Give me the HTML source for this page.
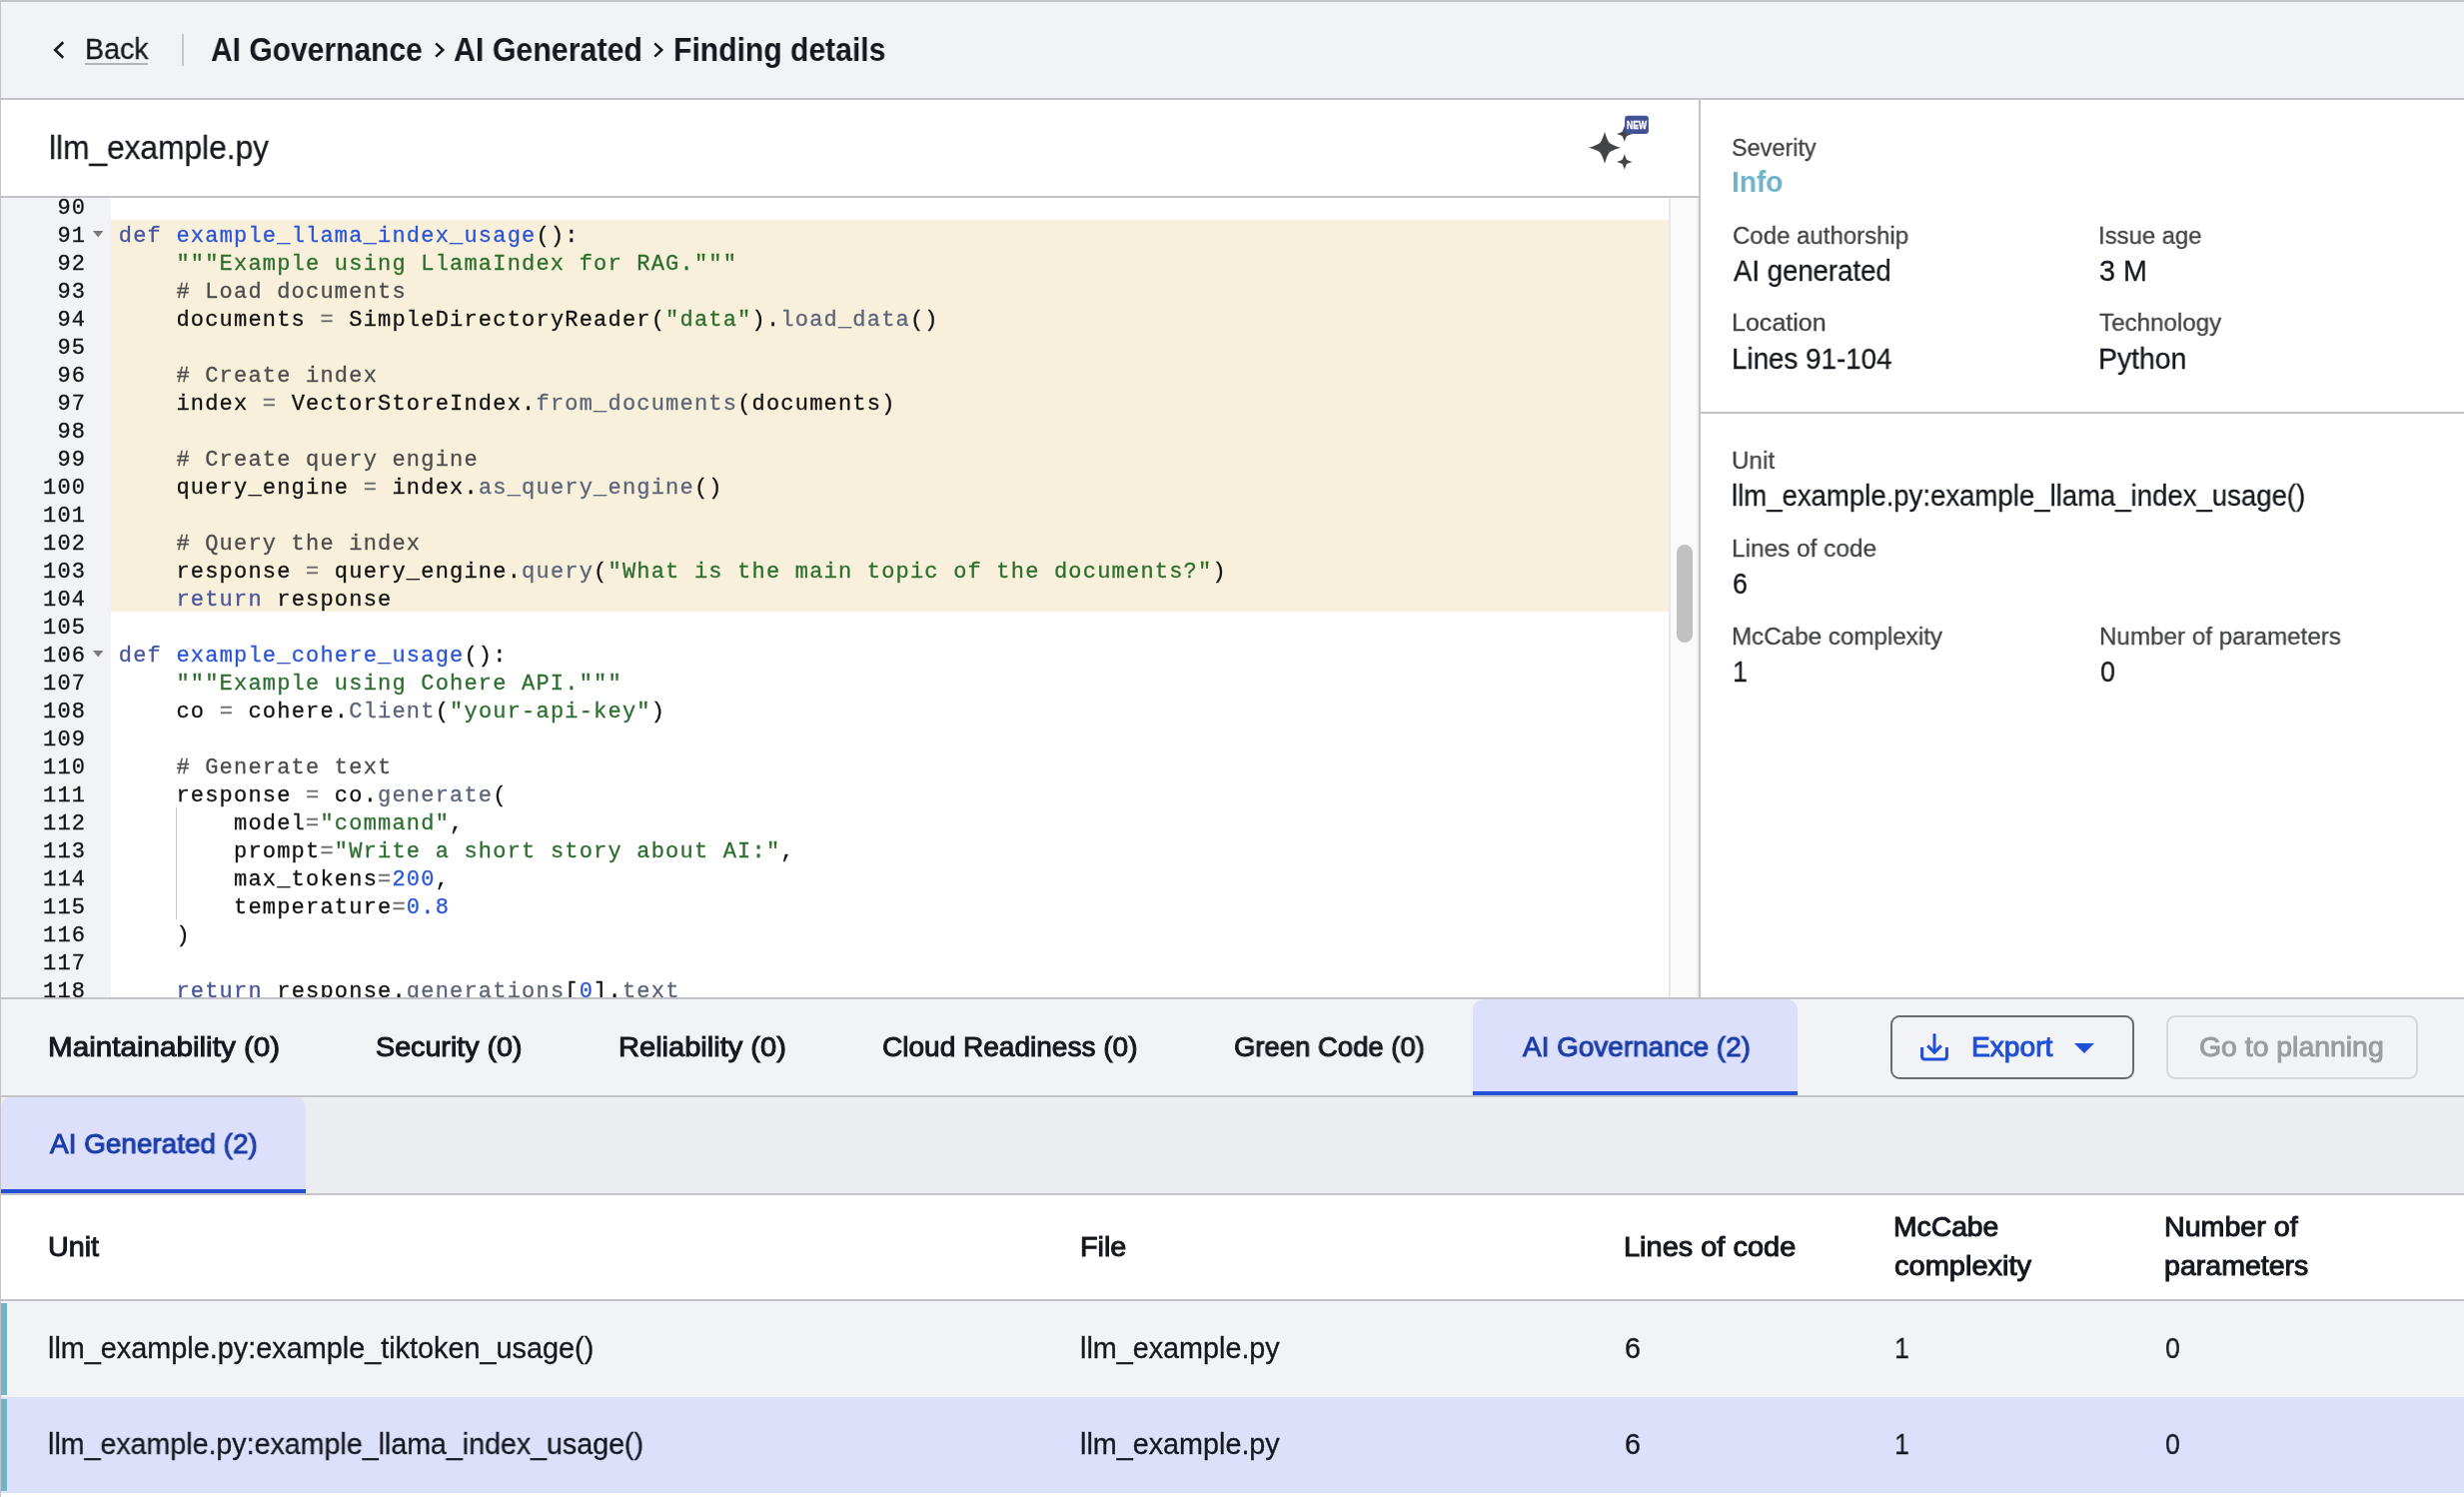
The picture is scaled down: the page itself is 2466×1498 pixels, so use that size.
<!DOCTYPE html><html lang="en"><head><meta charset="utf-8"><title>Finding details</title>
<style>
html,body{margin:0;padding:0;background:#fff;}
body{width:2466px;height:1498px;overflow:hidden;font-family:"Liberation Sans",sans-serif;}
#root{position:relative;width:2466px;height:1498px;overflow:hidden;background:#fff;}
.b{position:absolute;}
.t{position:absolute;white-space:pre;font-family:"Liberation Sans",sans-serif;transform-origin:0 0;will-change:transform;}
#codewrap{position:absolute;left:1px;top:198px;width:1699px;height:800px;overflow:hidden;background:#fff;}
#gutbg{position:absolute;left:0;top:0;width:110px;height:800px;background:#f2f3f6;}
#hlbg{position:absolute;left:110px;top:22px;width:1559px;height:392px;background:#f8f0da;}
#gutter{position:absolute;left:0;top:-6px;width:110px;height:830px;will-change:transform;}
.gn{height:28px;line-height:34px;font-family:"Liberation Mono",monospace;font-size:22px;letter-spacing:1.2px;color:#111;text-align:right;padding-right:24.8px;white-space:pre;}
#code{position:absolute;left:110px;top:-6px;width:1559px;will-change:transform;}
.ln{height:28px;line-height:34px;font-family:"Liberation Mono",monospace;font-size:22px;letter-spacing:1.2px;color:#111;white-space:pre;padding-left:7.8px;}
.ln i{font-style:normal;position:relative;}
.ln,.gn{box-sizing:border-box;-webkit-text-stroke-width:0.3px;}
.ln>*{}
i.k{color:#47549b;} i.f{color:#2a55d6;} i.s{color:#2c6e2f;} i.c{color:#4c4c4c;}
i.m{color:#5b6478;} i.n{color:#2a55d6;} i.o{color:#6e6e6e;}
</style></head><body><div id="root">
<div class="b" style="left:0;top:0;width:2466px;height:98px;background:#f2f3f6;"></div>
<div class="b" style="left:0;top:0;width:2466px;height:2px;background:#c4c4c8;"></div>
<div class="b" style="left:0;top:98px;width:2466px;height:2px;background:#c4c4c8;"></div>
<svg class="b" style="left:48px;top:36px" width="24" height="28" viewBox="0 0 24 28"><path d="M15.3 6.3 L7.2 14 L15.3 21.7" fill="none" stroke="#16181f" stroke-width="2.6" stroke-linecap="butt" stroke-linejoin="miter"/></svg>
<div class="b" style="left:85px;top:63px;width:63px;height:2px;background:#b3b4b9;"></div>
<div class="b" style="left:182px;top:34px;width:2px;height:32px;background:#c8c8cc;"></div>
<svg class="b" style="left:430.5px;top:38px" width="20" height="24" viewBox="0 0 20 24"><path d="M5.2 5.4 L12.3 12 L5.2 18.6" fill="none" stroke="#16181f" stroke-width="2.5"/></svg>
<svg class="b" style="left:649.7px;top:38px" width="20" height="24" viewBox="0 0 20 24"><path d="M5.2 5.4 L12.3 12 L5.2 18.6" fill="none" stroke="#16181f" stroke-width="2.5"/></svg>
<div class="b" style="left:0;top:196px;width:1700px;height:2px;background:#c4c4c8;"></div>
<svg class="b" style="left:1584px;top:110px;will-change:transform" width="72" height="64" viewBox="0 0 72 64">
<path d="M22.00 21.80 Q23.93 29.31 26.70 33.10 Q30.49 35.87 38.00 37.80 Q30.49 39.73 26.70 42.50 Q23.93 46.29 22.00 53.80 Q20.07 46.29 17.30 42.50 Q13.51 39.73 6.00 37.80 Q13.51 35.87 17.30 33.10 Q20.07 29.31 22.00 21.80Z" fill="#434447"/>
<path d="M41.80 16.10 Q42.73 19.71 44.00 21.80 Q46.09 23.06 49.70 24.00 Q46.09 24.94 44.00 26.20 Q42.73 28.29 41.80 31.90 Q40.86 28.29 39.60 26.20 Q37.51 24.94 33.90 24.00 Q37.51 23.06 39.60 21.80 Q40.86 19.71 41.80 16.10Z" fill="#434447"/>
<path d="M41.80 44.00 Q42.73 47.61 44.00 49.70 Q46.09 50.96 49.70 51.90 Q46.09 52.84 44.00 54.10 Q42.73 56.19 41.80 59.80 Q40.86 56.19 39.60 54.10 Q37.51 52.84 33.90 51.90 Q37.51 50.96 39.60 49.70 Q40.86 47.61 41.80 44.00Z" fill="#434447"/>
<rect x="42.1" y="5.8" width="23.8" height="18.2" rx="3.2" fill="#435193"/>
<text x="54" y="19.1" text-anchor="middle" font-family="Liberation Sans, sans-serif" font-weight="700" font-size="10.6" fill="#fff" stroke="#fff" stroke-width="0.35" textLength="20" lengthAdjust="spacingAndGlyphs">NEW</text>
</svg>
<div id="codewrap">
<div id="gutbg"></div><div id="hlbg"></div>
<div id="gutter"><div class="gn">90</div>
<div class="gn">91</div>
<div class="gn">92</div>
<div class="gn">93</div>
<div class="gn">94</div>
<div class="gn">95</div>
<div class="gn">96</div>
<div class="gn">97</div>
<div class="gn">98</div>
<div class="gn">99</div>
<div class="gn">100</div>
<div class="gn">101</div>
<div class="gn">102</div>
<div class="gn">103</div>
<div class="gn">104</div>
<div class="gn">105</div>
<div class="gn">106</div>
<div class="gn">107</div>
<div class="gn">108</div>
<div class="gn">109</div>
<div class="gn">110</div>
<div class="gn">111</div>
<div class="gn">112</div>
<div class="gn">113</div>
<div class="gn">114</div>
<div class="gn">115</div>
<div class="gn">116</div>
<div class="gn">117</div>
<div class="gn">118</div></div>
<div id="code"><div class="ln"></div>
<div class="ln hl"><i class="k">def</i> <i class="f">example_llama_index_usage</i>():</div>
<div class="ln hl">    <i class="s">&quot;&quot;&quot;Example using LlamaIndex for RAG.&quot;&quot;&quot;</i></div>
<div class="ln hl">    <i class="c"># Load documents</i></div>
<div class="ln hl">    documents <i class="o">=</i> SimpleDirectoryReader(<i class="s">&quot;data&quot;</i>).<i class="m">load_data</i>()</div>
<div class="ln hl"></div>
<div class="ln hl">    <i class="c"># Create index</i></div>
<div class="ln hl">    index <i class="o">=</i> VectorStoreIndex.<i class="m">from_documents</i>(documents)</div>
<div class="ln hl"></div>
<div class="ln hl">    <i class="c"># Create query engine</i></div>
<div class="ln hl">    query_engine <i class="o">=</i> index.<i class="m">as_query_engine</i>()</div>
<div class="ln hl"></div>
<div class="ln hl">    <i class="c"># Query the index</i></div>
<div class="ln hl">    response <i class="o">=</i> query_engine.<i class="m">query</i>(<i class="s">&quot;What is the main topic of the documents?&quot;</i>)</div>
<div class="ln hl">    <i class="k">return</i> response</div>
<div class="ln"></div>
<div class="ln"><i class="k">def</i> <i class="f">example_cohere_usage</i>():</div>
<div class="ln">    <i class="s">&quot;&quot;&quot;Example using Cohere API.&quot;&quot;&quot;</i></div>
<div class="ln">    co <i class="o">=</i> cohere.<i class="m">Client</i>(<i class="s">&quot;your-api-key&quot;</i>)</div>
<div class="ln"></div>
<div class="ln">    <i class="c"># Generate text</i></div>
<div class="ln">    response <i class="o">=</i> co.<i class="m">generate</i>(</div>
<div class="ln">        model<i class="o">=</i><i class="s">&quot;command&quot;</i>,</div>
<div class="ln">        prompt<i class="o">=</i><i class="s">&quot;Write a short story about AI:&quot;</i>,</div>
<div class="ln">        max_tokens<i class="o">=</i><i class="n">200</i>,</div>
<div class="ln">        temperature<i class="o">=</i><i class="n">0.8</i></div>
<div class="ln">    )</div>
<div class="ln"></div>
<div class="ln">    <i class="k">return</i> response.<i class="m">generations</i>[<i class="n">0</i>].<i class="m">text</i></div></div>
<svg class="b" style="left:92px;top:33px" width="11" height="7" viewBox="0 0 11 7"><path d="M0 0 H10.4 L5.2 6.6Z" fill="#7b7b7b"/></svg>
<svg class="b" style="left:92px;top:453px" width="11" height="7" viewBox="0 0 11 7"><path d="M0 0 H10.4 L5.2 6.6Z" fill="#7b7b7b"/></svg>
<div class="b" style="left:175px;top:610px;width:1px;height:112px;background:#c9c9c9;"></div>
<div class="b" style="left:1669px;top:0;width:30px;height:800px;background:#fafafa;box-shadow:inset 2px 0 0 #e8e8e8, inset -2px 0 0 #f0f0f0;"></div>
<div class="b" style="left:1677px;top:347px;width:16px;height:98px;background:#c1c1c1;border-radius:8px;"></div>
</div>
<div class="b" style="left:1700px;top:100px;width:2px;height:898px;background:#c4c4c8;"></div>
<div class="b" style="left:1702px;top:412px;width:764px;height:2px;background:#c4c4c8;"></div>
<div class="b" style="left:0;top:998px;width:2466px;height:2px;background:#c4c4c8;"></div>
<div class="b" style="left:0;top:1000px;width:2466px;height:96px;background:#f2f3f6;"></div>
<div class="b" style="left:1474px;top:1000px;width:325px;height:96px;background:#dde0fb;border-radius:10px 10px 0 0;"></div>
<div class="b" style="left:1474px;top:1092px;width:325px;height:4px;background:#2450d8;"></div>
<div class="b" style="left:0;top:1096px;width:2466px;height:2px;background:#c4c4c8;"></div>
<div class="b" style="left:1892px;top:1016px;width:244px;height:64px;box-sizing:border-box;border:2px solid #6b6c70;border-radius:9px;"></div>
<div class="b" style="left:2168px;top:1016px;width:252px;height:64px;box-sizing:border-box;border:2px solid #d6d7da;border-radius:9px;"></div>
<svg class="b" style="left:1918px;top:1030px" width="36" height="36" viewBox="0 0 36 36"><g fill="none" stroke="#1f4fd8" stroke-width="3"><path d="M5.6 18 V27 Q5.6 30 8.6 30 H27.4 Q30.4 30 30.4 27 V18"/><path d="M18 4.3 V23"/><path d="M11.2 16.4 L18 23.2 L24.8 16.4"/></g></svg>
<svg class="b" style="left:2075px;top:1043px" width="22" height="12" viewBox="0 0 22 12"><path d="M0.9 0.9 H21 L11 10.9Z" fill="#1f4fd8"/></svg>
<div class="b" style="left:0;top:1098px;width:2466px;height:96px;background:#ecedf1;"></div>
<div class="b" style="left:1px;top:1098px;width:305px;height:96px;background:#dde0fb;border-radius:10px 10px 0 0;"></div>
<div class="b" style="left:1px;top:1190px;width:305px;height:4px;background:#2450d8;"></div>
<div class="b" style="left:0;top:1194px;width:2466px;height:2px;background:#c4c4c8;"></div>
<div class="b" style="left:0;top:1300px;width:2466px;height:2px;background:#c4c4c8;"></div>
<div class="b" style="left:0;top:1302px;width:2466px;height:96px;background:#f2f3f6;"></div>
<div class="b" style="left:0;top:1398px;width:2466px;height:96px;background:#dde0fb;"></div>
<div class="b" style="left:1px;top:1304px;width:6px;height:92px;background:#71b4c9;"></div>
<div class="b" style="left:1px;top:1400px;width:6px;height:92px;background:#71b4c9;"></div>
<div class="b" style="left:0;top:0;width:1px;height:1498px;background:#c4c4c8;"></div>
<span class="t" id="back" style="left:84.67px;top:31.54px;font-size:28.75px;line-height:35px;color:#16181f;-webkit-text-stroke:0.3px #16181f;transform:scaleX(0.9939);">Back</span>
<span class="t" id="t1" style="left:211.10px;top:29.57px;font-size:33px;line-height:40px;color:#16181f;font-weight:700;transform:scaleX(0.9095);">AI Governance</span>
<span class="t" id="t2" style="left:453.50px;top:29.57px;font-size:33px;line-height:40px;color:#16181f;font-weight:700;transform:scaleX(0.9196);">AI Generated</span>
<span class="t" id="t3" style="left:674.10px;top:29.57px;font-size:33px;line-height:40px;color:#16181f;font-weight:700;transform:scaleX(0.9120);">Finding details</span>
<span class="t" id="fname" style="left:48.90px;top:127.57px;font-size:33px;line-height:40px;color:#16181f;-webkit-text-stroke:0.3px #16181f;transform:scaleX(0.9593);">llm_example.py</span>
<span class="t" id="l_sev" style="left:1733.39px;top:132.62px;font-size:24.75px;line-height:30px;color:#404246;-webkit-text-stroke:0.3px #404246;transform:scaleX(0.9464);">Severity</span>
<span class="t" id="v_sev" style="left:1732.90px;top:165.34px;font-size:28.75px;line-height:35px;color:#6db3cb;font-weight:700;transform:scaleX(0.9773);">Info</span>
<span class="t" id="l_auth" style="left:1733.63px;top:220.62px;font-size:24.75px;line-height:30px;color:#404246;-webkit-text-stroke:0.3px #404246;transform:scaleX(0.9700);">Code authorship</span>
<span class="t" id="v_auth" style="left:1734.57px;top:253.54px;font-size:28.75px;line-height:35px;color:#16181f;-webkit-text-stroke:0.3px #16181f;transform:scaleX(0.9574);">AI generated</span>
<span class="t" id="l_loc" style="left:1733.30px;top:308.42px;font-size:24.75px;line-height:30px;color:#404246;-webkit-text-stroke:0.3px #404246;transform:scaleX(1.0119);">Location</span>
<span class="t" id="v_loc" style="left:1733.14px;top:341.54px;font-size:28.75px;line-height:35px;color:#16181f;-webkit-text-stroke:0.3px #16181f;transform:scaleX(0.9654);">Lines 91-104</span>
<span class="t" id="l_age" style="left:2100.29px;top:220.62px;font-size:24.75px;line-height:30px;color:#404246;-webkit-text-stroke:0.3px #404246;transform:scaleX(0.9647);">Issue age</span>
<span class="t" id="v_age" style="left:2100.56px;top:253.54px;font-size:28.75px;line-height:35px;color:#16181f;-webkit-text-stroke:0.3px #16181f;transform:scaleX(0.9980);">3 M</span>
<span class="t" id="l_tech" style="left:2100.95px;top:308.42px;font-size:24.75px;line-height:30px;color:#404246;-webkit-text-stroke:0.3px #404246;transform:scaleX(0.9765);">Technology</span>
<span class="t" id="v_tech" style="left:2099.91px;top:341.54px;font-size:28.75px;line-height:35px;color:#16181f;-webkit-text-stroke:0.3px #16181f;transform:scaleX(0.9867);">Python</span>
<span class="t" id="l_unit" style="left:1732.50px;top:446.22px;font-size:24.75px;line-height:30px;color:#404246;-webkit-text-stroke:0.3px #404246;transform:scaleX(0.9795);">Unit</span>
<span class="t" id="v_unit" style="left:1732.50px;top:479.24px;font-size:28.75px;line-height:35px;color:#16181f;-webkit-text-stroke:0.3px #16181f;transform:scaleX(0.9581);">llm_example.py:example_llama_index_usage()</span>
<span class="t" id="l_loc2" style="left:1732.50px;top:534.22px;font-size:24.75px;line-height:30px;color:#404246;-webkit-text-stroke:0.3px #404246;transform:scaleX(0.9852);">Lines of code</span>
<span class="t" id="v_loc2" style="left:1734.30px;top:567.14px;font-size:28.75px;line-height:35px;color:#16181f;-webkit-text-stroke:0.3px #16181f;transform:scaleX(0.9300);">6</span>
<span class="t" id="l_mcc" style="left:1732.50px;top:622.22px;font-size:24.75px;line-height:30px;color:#404246;-webkit-text-stroke:0.3px #404246;transform:scaleX(0.9771);">McCabe complexity</span>
<span class="t" id="v_mcc" style="left:1733.50px;top:655.14px;font-size:28.75px;line-height:35px;color:#16181f;-webkit-text-stroke:0.3px #16181f;transform:scaleX(0.9300);">1</span>
<span class="t" id="l_np" style="left:2100.70px;top:622.22px;font-size:24.75px;line-height:30px;color:#404246;-webkit-text-stroke:0.3px #404246;transform:scaleX(0.9770);">Number of parameters</span>
<span class="t" id="v_np" style="left:2101.70px;top:655.14px;font-size:28.75px;line-height:35px;color:#16181f;-webkit-text-stroke:0.3px #16181f;transform:scaleX(0.9378);">0</span>
<span class="t" id="tab1" style="left:47.90px;top:1029.60px;font-size:28px;line-height:35px;color:#16181f;-webkit-text-stroke:1.0px #16181f;transform:scaleX(1.0580);">Maintainability (0)</span>
<span class="t" id="tab2" style="left:376.10px;top:1029.60px;font-size:28px;line-height:35px;color:#16181f;-webkit-text-stroke:1.0px #16181f;transform:scaleX(1.0242);">Security (0)</span>
<span class="t" id="tab3" style="left:619.10px;top:1029.60px;font-size:28px;line-height:35px;color:#16181f;-webkit-text-stroke:1.0px #16181f;transform:scaleX(1.0374);">Reliability (0)</span>
<span class="t" id="tab4" style="left:883.10px;top:1029.60px;font-size:28px;line-height:35px;color:#16181f;-webkit-text-stroke:1.0px #16181f;transform:scaleX(1.0012);">Cloud Readiness (0)</span>
<span class="t" id="tab5" style="left:1235.30px;top:1029.60px;font-size:28px;line-height:35px;color:#16181f;-webkit-text-stroke:1.0px #16181f;transform:scaleX(0.9807);">Green Code (0)</span>
<span class="t" id="tab6" style="left:1523.70px;top:1029.60px;font-size:28px;line-height:35px;color:#1a3da8;-webkit-text-stroke:1.0px #1a3da8;transform:scaleX(0.9961);">AI Governance (2)</span>
<span class="t" id="exp" style="left:1972.56px;top:1029.50px;font-size:28px;line-height:35px;color:#1f4fd8;-webkit-text-stroke:1.0px #1f4fd8;transform:scaleX(1.0056);">Export</span>
<span class="t" id="plan" style="left:2201.30px;top:1029.60px;font-size:28px;line-height:35px;color:#9b9ca0;-webkit-text-stroke:1.0px #9b9ca0;transform:scaleX(1.0139);">Go to planning</span>
<span class="t" id="sub1" style="left:50.10px;top:1127.40px;font-size:28px;line-height:35px;color:#1a3da8;-webkit-text-stroke:1.0px #1a3da8;transform:scaleX(0.9960);">AI Generated (2)</span>
<span class="t" id="h_unit" style="left:48.30px;top:1229.60px;font-size:28px;line-height:35px;color:#16181f;-webkit-text-stroke:1.0px #16181f;transform:scaleX(1.0251);">Unit</span>
<span class="t" id="h_file" style="left:1080.90px;top:1229.60px;font-size:28px;line-height:35px;color:#16181f;-webkit-text-stroke:1.0px #16181f;transform:scaleX(1.0265);">File</span>
<span class="t" id="h_loc" style="left:1624.90px;top:1229.60px;font-size:28px;line-height:35px;color:#16181f;-webkit-text-stroke:1.0px #16181f;transform:scaleX(1.0341);">Lines of code</span>
<span class="t" id="h_mc1" style="left:1894.90px;top:1209.60px;font-size:28px;line-height:35px;color:#16181f;-webkit-text-stroke:1.0px #16181f;transform:scaleX(1.0103);">McCabe</span>
<span class="t" id="h_mc2" style="left:1896.01px;top:1249.20px;font-size:28px;line-height:35px;color:#16181f;-webkit-text-stroke:1.0px #16181f;transform:scaleX(1.0363);">complexity</span>
<span class="t" id="h_np1" style="left:2165.50px;top:1209.60px;font-size:28px;line-height:35px;color:#16181f;-webkit-text-stroke:1.0px #16181f;transform:scaleX(1.0224);">Number of</span>
<span class="t" id="h_np2" style="left:2165.96px;top:1249.20px;font-size:28px;line-height:35px;color:#16181f;-webkit-text-stroke:1.0px #16181f;transform:scaleX(1.0195);">parameters</span>
<span class="t" id="r1u" style="left:48.10px;top:1331.54px;font-size:28.75px;line-height:35px;color:#16181f;-webkit-text-stroke:0.3px #16181f;transform:scaleX(1.0025);">llm_example.py:example_tiktoken_usage()</span>
<span class="t" id="r1f" style="left:1080.85px;top:1331.54px;font-size:28.75px;line-height:35px;color:#16181f;-webkit-text-stroke:0.3px #16181f;">llm_example.py</span>
<span class="t" id="r1a" style="left:1625.50px;top:1331.54px;font-size:28.75px;line-height:35px;color:#16181f;-webkit-text-stroke:0.3px #16181f;">6</span>
<span class="t" id="r1b" style="left:1896.49px;top:1331.54px;font-size:28.75px;line-height:35px;color:#16181f;-webkit-text-stroke:0.3px #16181f;transform:scaleX(0.9300);">1</span>
<span class="t" id="r1c" style="left:2166.50px;top:1331.54px;font-size:28.75px;line-height:35px;color:#16181f;-webkit-text-stroke:0.3px #16181f;transform:scaleX(0.9300);">0</span>
<span class="t" id="r2u" style="left:48.10px;top:1427.54px;font-size:28.75px;line-height:35px;color:#16181f;-webkit-text-stroke:0.3px #16181f;transform:scaleX(0.9945);">llm_example.py:example_llama_index_usage()</span>
<span class="t" id="r2f" style="left:1080.85px;top:1427.54px;font-size:28.75px;line-height:35px;color:#16181f;-webkit-text-stroke:0.3px #16181f;">llm_example.py</span>
<span class="t" id="r2a" style="left:1625.50px;top:1427.54px;font-size:28.75px;line-height:35px;color:#16181f;-webkit-text-stroke:0.3px #16181f;">6</span>
<span class="t" id="r2b" style="left:1896.49px;top:1427.54px;font-size:28.75px;line-height:35px;color:#16181f;-webkit-text-stroke:0.3px #16181f;transform:scaleX(0.9300);">1</span>
<span class="t" id="r2c" style="left:2166.50px;top:1427.54px;font-size:28.75px;line-height:35px;color:#16181f;-webkit-text-stroke:0.3px #16181f;transform:scaleX(0.9300);">0</span>
</div></body></html>
